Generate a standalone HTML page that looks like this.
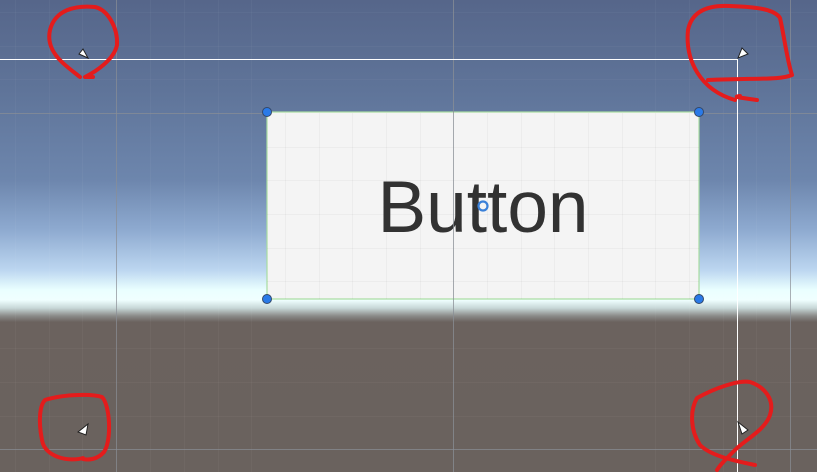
<!DOCTYPE html>
<html><head><style>
html,body{margin:0;padding:0;width:817px;height:472px;overflow:hidden}
body{position:relative;background:linear-gradient(to bottom,#56668a 0px,#5f7499 90px,#6d86ad 180px,#8eaad0 230px,#bcd6f0 270px,#eaffff 290px,#f0ffff 300px,#c8d8d8 308px,#8a8a88 316px,#6b625e 322px,#6a625e 472px)}
svg{position:absolute;left:0;top:0}
</style></head><body>
<svg width="817" height="472">
 <g stroke="#ffffff" stroke-opacity="0.035" stroke-width="1">
  <line x1="15.5" y1="0" x2="15.5" y2="472"/><line x1="49.5" y1="0" x2="49.5" y2="472"/><line x1="82.5" y1="0" x2="82.5" y2="472"/>
  <line x1="150.5" y1="0" x2="150.5" y2="472"/><line x1="184.5" y1="0" x2="184.5" y2="472"/><line x1="218.5" y1="0" x2="218.5" y2="472"/>
  <line x1="251.5" y1="0" x2="251.5" y2="472"/><line x1="655.5" y1="0" x2="655.5" y2="472"/><line x1="689.5" y1="0" x2="689.5" y2="472"/><line x1="723.5" y1="0" x2="723.5" y2="472"/><line x1="756.5" y1="0" x2="756.5" y2="472"/>
  <line x1="0" y1="79.5" x2="817" y2="79.5"/><line x1="0" y1="46.5" x2="817" y2="46.5"/><line x1="0" y1="12.5" x2="817" y2="12.5"/><line x1="0" y1="348.5" x2="817" y2="348.5"/><line x1="0" y1="382.5" x2="817" y2="382.5"/><line x1="0" y1="416.5" x2="817" y2="416.5"/>
 </g>
 <g stroke="#8a8f96" stroke-opacity="0.7" stroke-width="1">
  <line x1="116.5" y1="0" x2="116.5" y2="472"/>
  <line x1="790.5" y1="0" x2="790.5" y2="472"/>
  <line x1="0" y1="113.5" x2="817" y2="113.5"/>
  <line x1="0" y1="449.5" x2="817" y2="449.5"/>
 </g>
 <rect x="267" y="112" width="432" height="187" fill="#f4f4f4" stroke="#a8dca0" stroke-width="1.2"/>
 <g stroke="#000" stroke-opacity="0.03">
  <line x1="285.5" y1="113" x2="285.5" y2="299"/><line x1="319.5" y1="113" x2="319.5" y2="299"/><line x1="352.5" y1="113" x2="352.5" y2="299"/><line x1="386.5" y1="113" x2="386.5" y2="299"/><line x1="420.5" y1="113" x2="420.5" y2="299"/>
  <line x1="487.5" y1="113" x2="487.5" y2="299"/><line x1="521.5" y1="113" x2="521.5" y2="299"/><line x1="554.5" y1="113" x2="554.5" y2="299"/><line x1="588.5" y1="113" x2="588.5" y2="299"/><line x1="622.5" y1="113" x2="622.5" y2="299"/><line x1="655.5" y1="113" x2="655.5" y2="299"/><line x1="689.5" y1="113" x2="689.5" y2="299"/>
  <line x1="267" y1="147.5" x2="699" y2="147.5"/><line x1="267" y1="180.5" x2="699" y2="180.5"/><line x1="267" y1="214.5" x2="699" y2="214.5"/><line x1="267" y1="248.5" x2="699" y2="248.5"/><line x1="267" y1="281.5" x2="699" y2="281.5"/>
 </g>
 <text x="483" y="232" text-anchor="middle" font-family="Liberation Sans, sans-serif" font-size="73" fill="#323232">Button</text>
 <line x1="453.5" y1="0" x2="453.5" y2="472" stroke="#8a8f96" stroke-opacity="0.75"/>
 <circle cx="483" cy="206" r="4.5" fill="none" stroke="#3a80d8" stroke-width="2.2"/>
 <g fill="#2a7ae8" stroke="#33486a" stroke-width="1">
  <circle cx="267" cy="112" r="4.5"/><circle cx="699" cy="112" r="4.5"/><circle cx="267" cy="299" r="4.5"/><circle cx="699" cy="299" r="4.5"/>
 </g>
 <line x1="0" y1="59.5" x2="737" y2="59.5" stroke="#fff"/>
 <line x1="737.5" y1="59" x2="737.5" y2="472" stroke="#fff"/>
 <g fill="#fff" stroke="#222" stroke-width="1">
  <path d="M79 54 L83 49 L88 58 Z"/>
  <path d="M738 58 L742 48 L748 54 Z"/>
  <path d="M78 432 L88 424 L86 435 Z"/>
  <path d="M738 422 L748 430 L742 434 Z"/>
 </g>
 <g fill="none" stroke="#e41c1c" stroke-width="4" stroke-linecap="round" stroke-linejoin="round">
  <path d="M80 77 C65 65 45 52 50 30 C55 10 75 5 95 7 C108 10 118 28 117 45 C114 60 95 72 85 77 L93 77"/>
  <path d="M735 100 C700 90 685 60 688 30 C692 10 710 5 730 6 C760 7 775 10 780 18 C784 35 787 60 792 75 C780 80 760 78 708 80"/>
  <path d="M757 100 C745 98 730 97 740 96"/>
  <path d="M83 458 C70 462 45 458 42 440 C38 420 40 405 45 400 C60 395 90 393 102 397 C110 405 112 440 104 452 C97 460 88 460 83 459"/>
  <path d="M755 465 C730 460 710 455 700 445 C690 430 690 410 697 398 C715 388 738 380 750 382 C765 387 775 400 770 415 C765 430 745 440 735 450 C725 460 720 465 717 470"/>
 </g>
</svg>
</body></html>
